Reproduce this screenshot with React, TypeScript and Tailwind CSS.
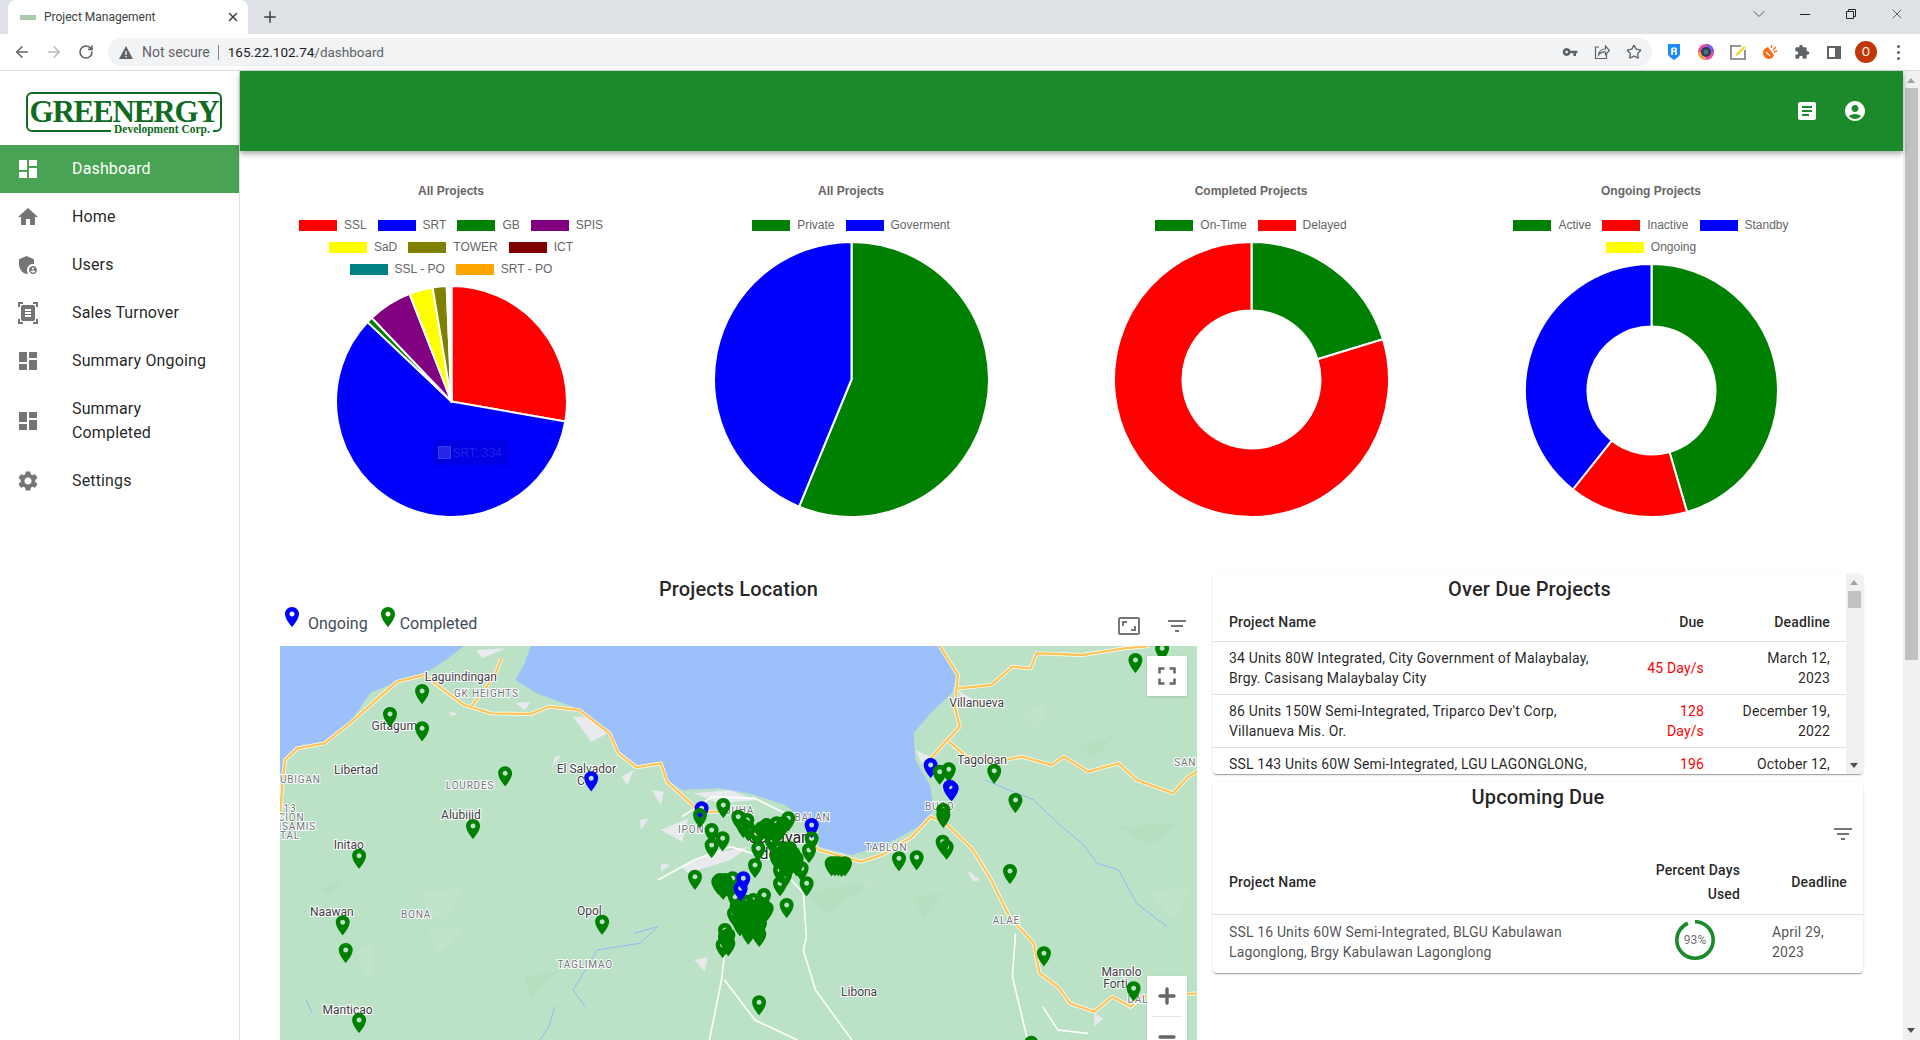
import React from "react";
import { ArrowLeft, ArrowRight, ChevronDown, Minus, Plus, RotateCw, Star, X } from "lucide-react";

const PATHS = {
  dashboard: "M3 13h8V3H3v10zm0 8h8v-6H3v6zm10 0h8V11h-8v10zm0-18v6h8V3h-8z",
  home: "M10 20v-6h4v6h5v-8h3L12 3 2 12h3v8z",
  admin:
    "M17 11c.34 0 .67.04 1 .09V6.27L10.5 3 3 6.27v4.91c0 4.54 3.2 8.79 7.5 9.82.55-.13 1.08-.32 1.6-.55-.69-.98-1.1-2.17-1.1-3.45 0-3.31 2.69-6 6-6zM17 13c-2.21 0-4 1.79-4 4s1.79 4 4 4 4-1.79 4-4-1.79-4-4-4zm0 1.38c.62 0 1.12.51 1.12 1.12s-.51 1.12-1.12 1.12-1.12-.51-1.12-1.12.5-1.12 1.12-1.12zm0 5.37c-.93 0-1.74-.46-2.24-1.17.05-.72 1.51-1.08 2.24-1.08s2.19.36 2.24 1.08c-.5.71-1.31 1.17-2.24 1.17z",
  scanner:
    "M7 3H4v3H2V1h5v2zm15 3V1h-5v2h3v3h2zM7 21H4v-3H2v5h5v-2zm13-3v3h-3v2h5v-5h-2zM19 18c0 1.1-.9 2-2 2H7c-1.1 0-2-.9-2-2V6c0-1.1.9-2 2-2h10c1.1 0 2 .9 2 2v12zM15 8H9v2h6V8zm0 3H9v2h6v-2zm0 3H9v2h6v-2z",
  settings:
    "M19.14 12.94c.04-.3.06-.61.06-.94 0-.32-.02-.64-.07-.94l2.03-1.58c.18-.14.23-.41.12-.61l-1.92-3.32c-.12-.22-.37-.29-.59-.22l-2.39.96c-.5-.38-1.03-.7-1.62-.94l-.36-2.54c-.04-.24-.24-.41-.48-.41h-3.84c-.24 0-.43.17-.47.41l-.36 2.54c-.59.24-1.13.57-1.62.94l-2.39-.96c-.22-.08-.47 0-.59.22L2.74 8.87c-.12.21-.08.47.12.61l2.03 1.58c-.05.3-.09.63-.09.94s.02.64.07.94l-2.03 1.58c-.18.14-.23.41-.12.61l1.92 3.32c.12.22.37.29.59.22l2.39-.96c.5.38 1.03.7 1.62.94l.36 2.54c.05.24.24.41.48.41h3.84c.24 0 .44-.17.47-.41l.36-2.54c.59-.24 1.13-.56 1.62-.94l2.39.96c.22.08.47 0 .59-.22l1.92-3.32c.12-.22.07-.47-.12-.61l-2.01-1.58zM12 15.6c-1.98 0-3.6-1.62-3.6-3.6s1.62-3.6 3.6-3.6 3.6 1.62 3.6 3.6-1.62 3.6-3.6 3.6z",
  article:
    "M19 3H5c-1.1 0-2 .9-2 2v14c0 1.1.9 2 2 2h14c1.1 0 2-.9 2-2V5c0-1.1-.9-2-2-2zm-5 14H7v-2h7v2zm3-4H7v-2h10v2zm0-4H7V7h10v2z",
  account:
    "M12 2C6.48 2 2 6.48 2 12s4.48 10 10 10 10-4.48 10-10S17.52 2 12 2zm0 4c1.93 0 3.5 1.57 3.5 3.5S13.93 13 12 13s-3.5-1.57-3.5-3.5S10.07 6 12 6zm0 14c-2.03 0-4.43-.82-6.14-2.88C7.55 15.8 9.68 15 12 15s4.45.8 6.14 2.12C16.43 19.18 14.03 20 12 20z",
  place:
    "M12 2C8.13 2 5 5.13 5 9c0 5.25 7 13 7 13s7-7.75 7-13c0-3.87-3.13-7-7-7zm0 9.5c-1.38 0-2.5-1.12-2.5-2.5s1.12-2.5 2.5-2.5 2.5 1.12 2.5 2.5-1.12 2.5-2.5 2.5z",
  filter: "M10 18h4v-2h-4v2zM3 6v2h18V6H3zm3 7h12v-2H6v2z",
  aspect:
    "M19 12h-2v3h-3v2h5v-5zM7 9h3V7H5v5h2V9zm14-6H3c-1.1 0-2 .9-2 2v14c0 1.1.9 2 2 2h18c1.1 0 2-.9 2-2V5c0-1.1-.9-2-2-2zm0 16.01H3V4.99h18v14.02z",
  fullscreen: "M7 14H5v5h5v-2H7v-3zm-2-4h2V7h3V5H5v5zm12 7h-3v2h5v-5h-2v3zM14 5v2h3v3h2V5h-5z",
  key: "M12.65 10C11.83 7.67 9.61 6 7 6c-3.31 0-6 2.69-6 6s2.69 6 6 6c2.61 0 4.83-1.67 5.65-4H17v4h4v-4h2v-4H12.65zM7 14c-1.1 0-2-.9-2-2s.9-2 2-2 2 .9 2 2-.9 2-2 2z",
  puzzle:
    "M20.5 11H19V7c0-1.1-.9-2-2-2h-4V3.5C13 2.12 11.88 1 10.5 1S8 2.12 8 3.5V5H4c-1.1 0-1.99.9-1.99 2v3.8H3.5c1.49 0 2.7 1.21 2.7 2.7s-1.21 2.7-2.7 2.7H2V20c0 1.1.9 2 2 2h3.8v-1.5c0-1.49 1.21-2.7 2.7-2.7 1.49 0 2.7 1.21 2.7 2.7V22H17c1.1 0 2-.9 2-2v-4h1.5c1.38 0 2.5-1.12 2.5-2.5S21.88 11 20.5 11z",
};

const Icon: React.FC<{ d: string; className?: string }> = ({ d, className }) => (
  <svg viewBox="0 0 24 24" className={className} fill="currentColor" fillRule="evenodd">
    <path d={d} />
  </svg>
);

// ---- browser window chrome ----

const Extensions: React.FC = () => (
  <div className="flex items-center">
    <div className="w-8 h-8 flex items-center justify-center">
      <svg viewBox="0 0 12 16" className="w-[12px] h-4">
        <path d="M0 0h12v10c0 2-3 4-6 6-3-2-6-4-6-6z" fill="#1a8cff" />
        <path d="M3.2 11V4.6C3.2 3 8.8 3 8.8 4.6V11H7V8H5v3zM5 4.8v1.6h2V4.8z" fill="#fff" />
      </svg>
    </div>
    <div className="w-8 h-8 flex items-center justify-center">
      <svg viewBox="0 0 16 16" className="w-4 h-4">
        <circle cx="8" cy="8" r="8" fill="#e94b9c" />
        <path d="M8 0a8 8 0 0 1 8 8H8z" fill="#7a5cf0" />
        <path d="M0 8a8 8 0 0 0 8 8V8z" fill="#f5a04a" />
        <circle cx="8" cy="8" r="5" fill="#2c3e50" />
        <circle cx="8" cy="8" r="2.4" fill="#51708a" />
      </svg>
    </div>
    <div className="w-8 h-8 flex items-center justify-center">
      <svg viewBox="0 0 16 16" className="w-4 h-4">
        <path d="M1 2h10M1 1v14h14V6" fill="none" stroke="#777" strokeWidth="1.6" />
        <path d="M6 10l8-8 1.6 1.6-8 8H6z" fill="#fbd31c" />
      </svg>
    </div>
    <div className="w-8 h-8 flex items-center justify-center">
      <svg viewBox="0 0 16 16" className="w-4 h-4">
        <path d="M1 9c0-3 2-5 5-6l6 8c-1 3-3 4-5 4-3 0-6-3-6-6z" fill="#ff6a13" />
        <path d="M4 8l4 4" stroke="#fff" strokeWidth="1.2" />
        <path d="M9 4l1-3M11 6l3-3M12 8l3-1" stroke="#ff6a13" strokeWidth="1.4" />
      </svg>
    </div>
    <div className="w-8 h-8 flex items-center justify-center text-[#5f6368]">
      <Icon d={PATHS.puzzle} className="w-4 h-4" />
    </div>
    <div className="w-8 h-8 flex items-center justify-center">
      <div className="w-[14px] h-[13px] border-2 border-r-[6px] border-[#5f6368]" />
    </div>
    <div className="w-8 h-8 flex items-center justify-center">
      <div className="w-[22px] h-[22px] rounded-full bg-[#c1370a] text-white text-[12px] flex items-center justify-center">O</div>
    </div>
    <div className="w-8 h-8 flex flex-col items-center justify-center gap-[3px]">
      <div className="w-[3px] h-[3px] rounded-full bg-[#5f6368]" />
      <div className="w-[3px] h-[3px] rounded-full bg-[#5f6368]" />
      <div className="w-[3px] h-[3px] rounded-full bg-[#5f6368]" />
    </div>
  </div>
);

const BrowserChrome: React.FC = () => (
  <div className="shrink-0">
    <div className="h-[34px] bg-[#dee1e6] flex items-end pl-2">
      <div className="w-[240px] h-[34px] bg-white rounded-t-lg flex items-center pl-3 pr-2">
        <div className="w-4 h-[5px] bg-[#a9cbab] mr-2" />
        <span className="text-[12px] text-[#3c4043] flex-1">Project Management</span>
        <X className="w-[14px] h-[14px] text-[#3c4043]" strokeWidth={2.5} />
      </div>
      <div className="w-11 h-[34px] flex items-center justify-center text-[#3c4043]">
        <Plus className="w-[18px] h-[18px]" strokeWidth={2} />
      </div>
      <div className="ml-auto flex h-[28px] self-start text-[#3c4043]">
        <div className="w-[46px] flex items-center justify-center">
          <ChevronDown className="w-5 h-5" strokeWidth={1} />
        </div>
        <div className="w-[46px] flex items-center justify-center">
          <div className="w-[10px] h-[1px] bg-[#222]" />
        </div>
        <div className="w-[46px] flex items-center justify-center">
          <svg viewBox="0 0 10 10" className="w-[10px] h-[10px]" fill="none" stroke="#222">
            <path d="M.5 2.5h7v7h-7zM2.5 2.5v-2h7v7h-2" />
          </svg>
        </div>
        <div className="w-[46px] flex items-center justify-center">
          <X className="w-[16px] h-[16px] text-[#222]" strokeWidth={1} />
        </div>
      </div>
    </div>
    <div className="h-[37px] bg-white border-b border-[#dadce0] flex items-center pl-1.5 pr-1.5">
      <div className="w-8 flex justify-center text-[#5f6368]">
        <ArrowLeft className="w-[18px] h-[18px]" strokeWidth={2} />
      </div>
      <div className="w-8 flex justify-center text-[#b6b9bd]">
        <ArrowRight className="w-[18px] h-[18px]" strokeWidth={2} />
      </div>
      <div className="w-8 flex justify-center text-[#5f6368]">
        <RotateCw className="w-4 h-4" strokeWidth={2.4} />
      </div>
      <div className="ml-[6px] flex-1 h-[28px] rounded-full bg-[#f1f3f4] flex items-center pl-[11px] pr-[2px]">
        <svg viewBox="0 0 14 13" className="w-[14px] h-[13px]">
          <path d="M7 0l7 13H0z" fill="#5f6368" />
          <path d="M6.3 5h1.4v4H6.3zM6.3 10h1.4v1.4H6.3z" fill="#f1f3f4" />
        </svg>
        <span className="ml-[9px] text-[14px] text-[#5f6368]">Not secure</span>
        <div className="w-px h-[15px] bg-[#80868b] ml-2 mr-[9px]" />
        <span className="text-[13.5px] text-[#202124]">165.22.102.74</span>
        <span className="text-[13.5px] text-[#5f6368]">/dashboard</span>
        <div className="ml-auto flex items-center text-[#5f6368]">
          <div className="w-8 flex justify-center">
            <Icon d={PATHS.key} className="w-4 h-4" />
          </div>
          <div className="w-8 flex justify-center">
            <svg viewBox="0 0 16 16" className="w-4 h-4" fill="none" stroke="#5f6368" strokeWidth="1.2">
              <path d="M5 3H1.5v11.5h11V10" />
              <path d="M4.5 11c.5-4 3.5-6 7-6V2l4 4.5-4 4V8C8 7.5 6 9 4.5 11z" />
            </svg>
          </div>
          <div className="w-8 flex justify-center">
            <Star className="w-4 h-4" strokeWidth={2} />
          </div>
        </div>
      </div>
      <div className="ml-[6px]">
        <Extensions />
      </div>
    </div>
  </div>
);

// ---- sidebar ----

const navItems = [
  { label: "Dashboard", icon: PATHS.dashboard, active: true },
  { label: "Home", icon: PATHS.home },
  { label: "Users", icon: PATHS.admin },
  { label: "Sales Turnover", icon: PATHS.scanner },
  { label: "Summary Ongoing", icon: PATHS.dashboard },
  { label: "Summary Completed", icon: PATHS.dashboard },
  { label: "Settings", icon: PATHS.settings },
];

const Logo: React.FC = () => (
  <div className="h-[74px] pl-[26px] pt-[21px]">
    <div className="relative w-[196px] h-[40px] border-2 border-[#0f6b22] rounded-[6px] text-[#0f6b22] font-['Liberation_Serif',serif] font-bold">
      <div className="text-[31px] leading-[36px] tracking-[-1.2px] text-center whitespace-nowrap">GREENERGY</div>
      <div className="absolute left-[83px] top-[28px] bg-white px-[3px] text-[11.5px] leading-[14px] whitespace-nowrap">Development Corp.</div>
    </div>
  </div>
);

const Sidebar: React.FC = () => (
  <div className="w-[240px] shrink-0 border-r border-[#e0e0e0] bg-white">
    <Logo />
    {navItems.map((item) => (
      <div
        key={item.label}
        className={item.active ? "flex items-center min-h-12 px-4 py-3 bg-[#49a354] text-white" : "flex items-center min-h-12 px-4 py-3 text-[rgba(0,0,0,0.87)]"}
      >
        <Icon d={item.icon} className={item.active ? "w-6 h-6 shrink-0 text-white" : "w-6 h-6 shrink-0 text-[#757575]"} />
        <span className="ml-8 text-[16px] leading-6 tracking-[0.15px] w-[136px]">{item.label}</span>
      </div>
    ))}
  </div>
);

// ---- charts ----

type Segment = { color: string; end: number };

const polar = (c: number, r: number, deg: number): [number, number] => {
  const a = ((deg - 90) * Math.PI) / 180;
  return [c + r * Math.cos(a), c + r * Math.sin(a)];
};

const arcPath = (c: number, r: number, inner: number, from: number, to: number) => {
  const large = to - from > 180 ? 1 : 0;
  const [x1, y1] = polar(c, r, from);
  const [x2, y2] = polar(c, r, to);
  if (inner === 0) return `M${c} ${c}L${x1} ${y1}A${r} ${r} 0 ${large} 1 ${x2} ${y2}Z`;
  const [x3, y3] = polar(c, inner, to);
  const [x4, y4] = polar(c, inner, from);
  return `M${x1} ${y1}A${r} ${r} 0 ${large} 1 ${x2} ${y2}L${x3} ${y3}A${inner} ${inner} 0 ${large} 0 ${x4} ${y4}Z`;
};

const Pie: React.FC<{ size: number; hole?: number; segments: Segment[] }> = ({ size, hole = 0, segments }) => {
  const c = size / 2;
  let from = 0;
  return (
    <svg width={size} height={size} viewBox={`0 0 ${size} ${size}`} className="block overflow-visible">
      {segments.map((s, i) => {
        // the white segment stroke eats a pixel, so the arc runs one past the box
        const d = arcPath(c, c + 1, hole, from, s.end);
        from = s.end;
        return <path key={i} d={d} fill={s.color} stroke="#fff" strokeWidth={2} strokeLinejoin="round" />;
      })}
    </svg>
  );
};

const ChartCard: React.FC<{
  title: string;
  legend: { label: string; color: string }[];
  children: React.ReactNode;
}> = ({ title, legend, children }) => (
  <div className="w-[400px] flex flex-col items-center font-['Liberation_Sans',Arial,sans-serif] text-[#666]">
    <div className="h-[14px] leading-[14px] text-[12px] font-bold">{title}</div>
    <div className="mt-[16px] w-[330px] flex flex-wrap justify-center">
      {legend.map((l) => (
        <div key={l.label} className="h-[22px] flex items-center text-[12px] mx-[5.5px]">
          <div className="w-[38px] h-[11px] mr-[7px]" style={{ backgroundColor: l.color }} />
          {l.label}
        </div>
      ))}
    </div>
    <div className="relative mt-[7px]">{children}</div>
  </div>
);

const Charts: React.FC = () => (
  <div className="flex pl-[11px] pt-[33px] h-[365px] shrink-0">
    <ChartCard
      title="All Projects"
      legend={[
        { label: "SSL", color: "#ff0000" },
        { label: "SRT", color: "#0000ff" },
        { label: "GB", color: "#008000" },
        { label: "SPIS", color: "#800080" },
        { label: "SaD", color: "#ffff00" },
        { label: "TOWER", color: "#808000" },
        { label: "ICT", color: "#800000" },
        { label: "SSL - PO", color: "#008080" },
        { label: "SRT - PO", color: "#ffa500" },
      ]}
    >
      <Pie
        size={229}
        segments={[
          { color: "#ff0000", end: 100 },
          { color: "#0000ff", end: 313.4 },
          { color: "#008000", end: 316.4 },
          { color: "#800080", end: 338.7 },
          { color: "#ffff00", end: 350.6 },
          { color: "#808000", end: 357.6 },
          { color: "#800000", end: 358.2 },
          { color: "#008080", end: 359 },
          { color: "#ffa500", end: 360 },
        ]}
      />
      <div className="absolute left-[96px] top-[153px] w-[76px] h-[25px] rounded-[6px] bg-black/10 flex items-center pl-[5px] text-[12px] text-white/15">
        <div className="w-[13px] h-[13px] bg-white/15 border border-white/10 mr-[2px]" />
        SRT: 334
      </div>
    </ChartCard>
    <ChartCard
      title="All Projects"
      legend={[
        { label: "Private", color: "#008000" },
        { label: "Goverment", color: "#0000ff" },
      ]}
    >
      <Pie
        size={273}
        segments={[
          { color: "#008000", end: 202.4 },
          { color: "#0000ff", end: 360 },
        ]}
      />
    </ChartCard>
    <ChartCard
      title="Completed Projects"
      legend={[
        { label: "On-Time", color: "#008000" },
        { label: "Delayed", color: "#ff0000" },
      ]}
    >
      <Pie
        size={273}
        hole={69}
        segments={[
          { color: "#008000", end: 73 },
          { color: "#ff0000", end: 360 },
        ]}
      />
    </ChartCard>
    <ChartCard
      title="Ongoing Projects"
      legend={[
        { label: "Active", color: "#008000" },
        { label: "Inactive", color: "#ff0000" },
        { label: "Standby", color: "#0000ff" },
        { label: "Ongoing", color: "#ffff00" },
      ]}
    >
      <Pie
        size={251}
        hole={64}
        segments={[
          { color: "#008000", end: 163.7 },
          { color: "#ff0000", end: 218.5 },
          { color: "#0000ff", end: 360 },
        ]}
      />
    </ChartCard>
  </div>
);

// ---- map ----

// points read off the reference crops, then converted to map pixels
const pt = (x: number, y: number): [number, number] => [x / 1.65 - 10, y / 3 - 86];
const cityPt = (x: number, y: number): [number, number] => [380 + x / 3, 114 + y / 3];
const line = (pts: number[][]) => pts.map(([x, y], i) => `${i ? "L" : "M"}${pt(x, y).join(" ")}`).join("");
const poly = (pts: number[][]) => `${line(pts)}Z`;

const waterWest = [[0, 258], [320, 258], [290, 300], [260, 335], [215, 360], [165, 400], [135, 480], [90, 550], [40, 565], [25, 610], [17, 720], [0, 720]];
const waterBay = [[430, 258], [420, 310], [405, 360], [440, 400], [500, 440], [550, 510], [575, 570], [600, 620], [640, 605], [655, 660], [680, 690], [740, 685], [790, 700], [850, 735], [875, 770], [905, 800], [905, 860], [960, 885], [1020, 850], [1070, 800], [1095, 750], [1090, 680], [1065, 600], [1062, 520], [1090, 460], [1125, 400], [1135, 340], [1105, 258]];

const greyPatches = [
  [[500, 470], [520, 470], [558, 520], [530, 545]],
  [[295, 455], [310, 460], [300, 470]],
  [[405, 430], [430, 425], [420, 450]],
  [[630, 690], [650, 695], [645, 735]],
  [[645, 810], [690, 775], [680, 845]],
  [[580, 650], [600, 630], [590, 675]],
  [[610, 780], [625, 775], [612, 810]],
  [[1135, 390], [1170, 430], [1145, 435]],
  [[1065, 570], [1090, 590], [1075, 610]],
  [[470, 590], [480, 585], [465, 625]],
  [[645, 910], [660, 915], [645, 935]],
  [[700, 1200], [722, 1190], [718, 1235]],
  [[1150, 930], [1172, 960], [1160, 965]],
  [[700, 700], [760, 690], [800, 720], [740, 730]],
  [[1360, 1360], [1375, 1375], [1360, 1400]],
  [[340, 270], [390, 265], [350, 295]],
  [[730, 880], [790, 860], [760, 900], [690, 940], [680, 920]],
];

const terrain = [
  [[85, 990], [120, 960], [100, 1010]],
  [[250, 1000], [320, 980], [290, 1080], [260, 1060]],
  [[1400, 800], [1500, 790], [1450, 860]],
  [[1240, 470], [1280, 430], [1270, 510]],
  [[880, 1000], [1000, 960], [920, 1060]],
  [[140, 1180], [170, 1140], [165, 1260]],
  [[1060, 1010], [1110, 1000], [1080, 1080]],
  [[260, 1110], [320, 1100], [280, 1180]],
  [[1330, 560], [1400, 520], [1360, 590]],
  [[980, 960], [1000, 965], [980, 1000]],
  [[420, 1250], [480, 1230], [430, 1320]],
  [[1450, 1000], [1520, 980], [1490, 1080]],
];

const orangeRoads = [
  [[17, 760], [20, 680], [25, 600], [45, 565], [90, 550], [135, 485], [175, 420], [210, 365], [255, 345], [290, 395], [320, 435], [365, 460], [430, 462], [460, 440], [510, 450], [560, 520], [575, 580], [605, 622], [645, 610], [655, 665], [700, 740], [720, 755], [790, 755]],
  [[890, 840], [905, 870], [945, 890], [975, 905], [1010, 885], [1060, 830], [1090, 770], [1115, 790], [1160, 870], [1190, 960], [1220, 1070], [1260, 1150], [1270, 1240], [1300, 1280], [1320, 1330], [1360, 1355], [1390, 1310], [1420, 1340], [1440, 1310], [1530, 1300]],
  [[1105, 258], [1135, 345], [1130, 440], [1138, 500], [1115, 545], [1090, 595]],
  [[1120, 545], [1150, 590], [1200, 605], [1240, 590], [1290, 615], [1310, 590], [1350, 635], [1400, 610], [1430, 660], [1490, 700], [1515, 650], [1530, 635]],
  [[1135, 385], [1190, 375], [1225, 320], [1255, 325], [1265, 280], [1340, 285], [1410, 265], [1450, 258]],
  [[382, 295], [370, 350], [332, 440]],
];

const whiteRoads = [
  [[680, 770], [730, 710], [800, 715], [850, 760]],
  [[880, 1000], [885, 1130], [880, 1170], [900, 1290], [960, 1440]],
  [[750, 1180], [745, 1260], [725, 1440]],
  [[750, 1260], [800, 1380], [870, 1440]],
  [[1230, 1120], [1225, 1250], [1250, 1440]],
  [[1275, 1340], [1300, 1410], [1350, 1420]],
  [[700, 900], [760, 860], [830, 900], [880, 1000]],
  [[640, 960], [700, 900]],
];

const rivers = [
  [[1180, 660], [1260, 720], [1300, 790], [1340, 850], [1365, 910], [1400, 930], [1430, 1030], [1480, 1100]],
  [[600, 1120], [640, 1100], [610, 1150], [540, 1170], [500, 1290], [520, 1340]],
  [[470, 1340], [460, 1400], [445, 1440]],
  [[60, 1320], [70, 1360]],
];

const labels = [
  { t: "Laguindingan", x: 315, y: 352, big: true },
  { t: "GK HEIGHTS", x: 357, y: 399 },
  { t: "Gitagum", x: 205, y: 498, big: true },
  { t: "Libertad", x: 142, y: 630, big: true },
  { t: "UBIGAN", x: 50, y: 656 },
  { t: "LOURDES", x: 330, y: 675 },
  { t: "El Salvador", x: 522, y: 627, big: true },
  { t: "C", x: 513, y: 663, big: true },
  { t: "IPON", x: 695, y: 806 },
  { t: "Alubijid", x: 315, y: 765, big: true },
  { t: "13", x: 33, y: 743 },
  { t: "CION", x: 35, y: 771 },
  { t: "ISAMIS", x: 45, y: 798 },
  { t: "TAL", x: 33, y: 826 },
  { t: "Initao", x: 130, y: 855, big: true },
  { t: "Naawan", x: 102, y: 1056, big: true },
  { t: "BONA", x: 241, y: 1062 },
  { t: "Opol", x: 527, y: 1053, big: true },
  { t: "TAGLIMAO", x: 520, y: 1212 },
  { t: "Manticao", x: 128, y: 1350, big: true },
  { t: "Libona", x: 972, y: 1296, big: true },
  { t: "Villanueva", x: 1166, y: 430, big: true },
  { t: "Tagoloan", x: 1175, y: 600, big: true },
  { t: "SAN", x: 1510, y: 605 },
  { t: "BUGO", x: 1105, y: 737 },
  { t: "JUHA", x: 775, y: 750 },
  { t: "BALAN", x: 895, y: 770 },
  { t: "TABLON", x: 1017, y: 860 },
  { t: "ALAE", x: 1215, y: 1080 },
  { t: "Manolo", x: 1405, y: 1237, big: true },
  { t: "Forti", x: 1395, y: 1273, big: true },
  { t: "DAL", x: 1432, y: 1318 },
];

const greenOuter = [
  [1472, 265], [1428, 300], [251, 393], [198, 462], [251, 505], [388, 640], [335, 798], [147, 887], [120, 1087], [125, 1170],
  [147, 1380], [548, 1085], [807, 1327], [1195, 632], [1105, 635], [1120, 628], [1230, 720], [1221, 933], [1277, 1180], [1425, 1285], [1256, 1448],
].map(([x, y]) => pt(x, y));

const blueUnder = [[125, 145], [455, 195], [812, 15]].map(([x, y]) => cityPt(x, y));
const blueOver = [[250, 355], [242, 385], [875, 85], [870, 80]].map(([x, y]) => cityPt(x, y));
const blueOuter = [pt(530, 655)];

const greenCity = [
  [120, 165], [190, 135], [235, 170], [262, 180], [250, 195], [155, 210], [188, 235], [155, 255], [105, 350], [285, 315],
  [295, 265], [290, 220], [320, 195], [350, 190], [385, 175], [345, 215], [335, 240], [455, 235], [447, 270], [375, 265],
  [360, 280], [390, 265], [410, 295], [380, 300], [365, 285], [425, 325], [360, 330], [375, 345], [360, 370], [440, 370],
  [380, 435], [515, 310], [525, 310], [535, 310], [545, 312], [555, 310], [717, 295], [770, 292], [850, 165], [850, 150],
  [848, 245], [860, 260], [180, 360], [195, 360], [218, 355], [175, 365], [190, 380], [225, 410], [312, 405], [260, 425],
  [280, 420], [300, 430], [320, 445], [222, 460], [240, 490], [260, 450], [280, 460], [295, 470], [270, 490], [285, 500],
  [265, 515], [298, 522], [195, 510], [205, 525], [188, 555], [205, 550], [290, 445], [305, 450], [250, 440],
  // the solid middle of the cluster, where pins sit on one another
  [265, 205], [305, 205], [330, 205], [360, 205], [370, 190], [355, 265], [370, 280], [385, 285], [400, 280], [350, 290],
  [365, 300], [395, 305], [380, 315], [410, 310], [270, 440], [285, 440], [255, 470], [275, 475], [310, 435], [250, 490],
  [300, 490], [280, 480], [290, 510], [270, 505], [200, 370], [185, 375], [210, 380], [230, 440], [235, 475], [195, 530],
].map(([x, y]) => cityPt(x, y));

const Pins: React.FC<{ list: number[][]; color: string }> = ({ list, color }) => (
  <>
    {list.map(([x, y], i) => (
      <path key={i} d={PATHS.place} fill={color} fillRule="evenodd" transform={`translate(${x - 12} ${y - 9})`} />
    ))}
  </>
);

const MapView: React.FC = () => (
  <div className="relative w-[917px] h-[394px] overflow-hidden bg-[#bbe2c6]">
    <svg viewBox="0 0 917 394" className="block w-[917px] h-[394px] font-[Roboto,sans-serif]">
      {terrain.map((p, i) => (
        <path key={i} d={poly(p)} fill={i % 2 ? "#c0e4ca" : "#b4dfc0"} />
      ))}
      {greyPatches.map((p, i) => (
        <path key={i} d={poly(p)} fill="#e8eaed" />
      ))}
      <path d={poly(waterWest)} fill="#9cc0f9" />
      <path d={poly(waterBay)} fill="#9cc0f9" />
      {rivers.map((p, i) => (
        <path key={i} d={line(p)} fill="none" stroke="#8fb8f5" strokeWidth={1} />
      ))}
      {whiteRoads.map((p, i) => (
        <path key={i} d={line(p)} fill="none" stroke="#fff" strokeWidth={1.6} />
      ))}
      {orangeRoads.map((p, i) => (
        <g key={i}>
          <path d={line(p)} fill="none" stroke="#fff" strokeWidth={3.8} />
          <path d={line(p)} fill="none" stroke="#fdc558" strokeWidth={2.4} />
        </g>
      ))}
      {labels.map((l) => (
        <text
          key={l.t}
          x={pt(l.x, l.y)[0]}
          y={pt(l.x, l.y)[1] + 4}
          textAnchor="middle"
          fontSize={l.big ? 12 : 10}
          letterSpacing={l.big ? 0 : 0.8}
          fill={l.big ? "#3c4043" : "#70757a"}
          stroke="#fff"
          strokeWidth={2}
          paintOrder="stroke"
        >
          {l.t}
        </text>
      ))}
      <text x={pt(840, 832)[0]} y={pt(840, 832)[1] + 6} textAnchor="middle" fontSize={16} fill="#202124" stroke="#fff" strokeWidth={2} paintOrder="stroke">Cagayan</text>
      <text x={pt(822, 880)[0]} y={pt(822, 880)[1] + 6} textAnchor="middle" fontSize={16} fill="#202124" stroke="#fff" strokeWidth={2} paintOrder="stroke">de</text>
      <Pins list={blueUnder} color="#0000ff" />
      <Pins list={blueOuter} color="#0000ff" />
      <Pins list={greenOuter} color="#008000" />
      <Pins list={greenCity} color="#008000" />
      <Pins list={blueOver} color="#0000ff" />
    </svg>
    <div className="absolute top-[10px] right-[10px] w-10 h-10 bg-white flex items-center justify-center text-[#666] shadow-sm">
      <Icon d={PATHS.fullscreen} className="w-[30px] h-[30px]" />
    </div>
    <div className="absolute top-[330px] right-[10px] w-10 h-[81px] bg-white shadow-sm flex flex-col items-center text-[#666]">
      <div className="h-10 flex items-center justify-center">
        <Plus className="w-6 h-6" strokeWidth={3.4} />
      </div>
      <div className="w-[30px] h-px bg-[#e6e6e6]" />
      <div className="h-10 flex items-center justify-center">
        <Minus className="w-6 h-6" strokeWidth={3.4} />
      </div>
    </div>
  </div>
);

const MapPanel: React.FC = () => (
  <div className="w-[917px] shrink-0">
    <h2 className="h-8 text-[20px] leading-[30px] tracking-[0.15px] font-medium text-center text-[rgba(0,0,0,0.87)]">Projects Location</h2>
    <div className="h-10 flex items-start">
      <Icon d={PATHS.place} className="w-6 h-6 -mt-[1px] text-[#0000ff]" />
      <span className="ml-[4px] mt-[8px] text-[16px] leading-5 text-[#3f4d5a]">Ongoing</span>
      <Icon d={PATHS.place} className="w-6 h-6 -mt-[1px] ml-[8px] text-[#008000]" />
      <span className="ml-0 mt-[8px] text-[16px] leading-5 text-[#3f4d5a]">Completed</span>
      <div className="ml-auto flex text-[#757575] mt-[8px]">
        <Icon d={PATHS.aspect} className="w-6 h-6" />
        <Icon d={PATHS.filter} className="w-6 h-6 ml-6 mr-[8px]" />
      </div>
    </div>
    <MapView />
  </div>
);

// ---- tables ----

const overDue = [
  { name: "34 Units 80W Integrated, City Government of Malaybalay, Brgy. Casisang Malaybalay City", due: "45 Day/s", deadline: "March 12, 2023" },
  { name: "86 Units 150W Semi-Integrated, Triparco Dev't Corp, Villanueva Mis. Or.", due: "128 Day/s", deadline: "December 19, 2022" },
  { name: "SSL 143 Units 60W Semi-Integrated, LGU LAGONGLONG, Misamis Oriental", due: "196 Day/s", deadline: "October 12, 2022" },
];

const OverDueCard: React.FC = () => (
  <div className="relative h-[200px] rounded bg-white overflow-hidden shadow-[0_2px_1px_-1px_rgba(0,0,0,0.2),0_1px_1px_0_rgba(0,0,0,0.14),0_1px_3px_0_rgba(0,0,0,0.12)]">
    <div className="w-[633px]">
      <h2 className="h-8 text-[20px] leading-[30px] tracking-[0.15px] font-medium text-center text-[rgba(0,0,0,0.87)]">Over Due Projects</h2>
      <table className="table-fixed w-[633px] text-[14px] leading-5 tracking-[0.15px] text-[rgba(0,0,0,0.87)]">
        <colgroup>
          <col className="w-[417px]" />
          <col className="w-[90px]" />
          <col className="w-[126px]" />
        </colgroup>
        <thead>
          <tr className="border-b border-[#e0e0e0] h-[35px]">
            <th className="pl-4 pb-[2px] text-left font-medium">Project Name</th>
            <th className="pr-4 pb-[2px] text-right font-medium">Due</th>
            <th className="pr-4 pb-[2px] text-right font-medium">Deadline</th>
          </tr>
        </thead>
        <tbody>
          {overDue.map((row) => (
            <tr key={row.name} className="border-b border-[#e0e0e0] h-[53px]">
              <td className="pl-4 pr-[26px] py-[6px] align-top">{row.name}</td>
              <td className="pl-4 pr-4 py-[6px] text-right text-[#ff0000]">{row.due}</td>
              <td className="pl-4 pr-4 py-[6px] text-right align-top">{row.deadline}</td>
            </tr>
          ))}
        </tbody>
      </table>
    </div>
    <div className="absolute top-0 right-0 bottom-0 w-[17px] bg-[#f1f1f1]">
      <div className="absolute top-[6px] left-[4px] w-0 h-0 border-x-[4px] border-x-transparent border-b-[5px] border-b-[#a3a3a3]" />
      <div className="absolute top-[17px] left-[2px] w-[13px] h-[17px] bg-[#c1c1c1]" />
      <div className="absolute bottom-[6px] left-[4px] w-0 h-0 border-x-[4px] border-x-transparent border-t-[5px] border-t-[#505050]" />
    </div>
  </div>
);

const Progress: React.FC<{ value: number }> = ({ value }) => {
  const r = 18.2;
  const len = 2 * Math.PI * r;
  return (
    <div className="relative w-10 h-10 mx-auto mb-[5px]">
      <svg viewBox="0 0 40 40" className="w-10 h-10 -rotate-90">
        <circle cx="20" cy="20" r={r} fill="none" stroke="#1b8a2a" strokeWidth={3.6} strokeDasharray={`${(len * value) / 100} ${len}`} />
      </svg>
      <div className="absolute inset-0 flex items-center justify-center text-[12px] text-[rgba(0,0,0,0.6)]">{value}%</div>
    </div>
  );
};

const UpcomingCard: React.FC = () => (
  <div className="h-[191px] rounded bg-white overflow-hidden shadow-[0_2px_1px_-1px_rgba(0,0,0,0.2),0_1px_1px_0_rgba(0,0,0,0.14),0_1px_3px_0_rgba(0,0,0,0.12)]">
    <h2 className="h-8 text-[20px] leading-[30px] tracking-[0.15px] font-medium text-center text-[rgba(0,0,0,0.87)]">Upcoming Due</h2>
    <div className="h-[38px] flex justify-end items-end pr-2 text-[#757575]">
      <Icon d={PATHS.filter} className="w-6 h-6 mb-[6px]" />
    </div>
    <table className="table-fixed w-[650px] text-[14px] tracking-[0.15px] text-[rgba(0,0,0,0.87)]">
      <colgroup>
        <col className="w-[421px]" />
        <col className="w-[122px]" />
        <col className="w-[107px]" />
      </colgroup>
      <thead>
        <tr className="border-b border-[#e0e0e0] h-[62px] leading-6">
          <th className="pl-4 pb-[2px] text-left font-medium">Project Name</th>
          <th className="pl-4 pr-4 pb-[2px] text-right font-medium">Percent Days Used</th>
          <th className="pr-4 pb-[2px] text-right font-medium">Deadline</th>
        </tr>
      </thead>
      <tbody className="leading-5 text-[rgba(0,0,0,0.7)]">
        <tr className="h-[59px]">
          <td className="pl-4 pr-4 pb-[3px]">SSL 16 Units 60W Semi-Integrated, BLGU Kabulawan Lagonglong, Brgy Kabulawan Lagonglong</td>
          <td className="pl-4 pr-4 pb-[3px]">
            <Progress value={93} />
          </td>
          <td className="pl-4 pr-4 pb-[3px]">April 29, 2023</td>
        </tr>
      </tbody>
    </table>
  </div>
);

const PageScrollbar: React.FC = () => (
  <div className="relative w-[17px] shrink-0 bg-[#f1f1f1]">
    <div className="absolute top-[7px] left-[4px] w-0 h-0 border-x-[4px] border-x-transparent border-b-[5px] border-b-[#a3a3a3]" />
    <div className="absolute top-[17px] left-[2px] w-[13px] h-[572px] bg-[#c1c1c1]" />
    <div className="absolute bottom-[7px] left-[4px] w-0 h-0 border-x-[4px] border-x-transparent border-t-[5px] border-t-[#505050]" />
  </div>
);

const App: React.FC = () => {
  return (
    <div className="w-[1920px] h-[1040px] overflow-hidden flex flex-col bg-white font-[Roboto,sans-serif]">
      <BrowserChrome />
      <div className="flex-1 flex min-h-0">
        <Sidebar />
        <div className="flex-1 min-w-0 flex flex-col">
          <header className="relative z-10 h-[80px] shrink-0 bg-[#1b8a2a] shadow-[0_2px_4px_-1px_rgba(0,0,0,0.2),0_4px_5px_0_rgba(0,0,0,0.14),0_1px_10px_0_rgba(0,0,0,0.12)] flex items-center justify-end pr-[36px] text-white">
            <Icon d={PATHS.article} className="w-6 h-6" />
            <Icon d={PATHS.account} className="w-6 h-6 ml-6" />
          </header>
          <Charts />
          <div className="flex gap-4 pl-10 pt-[58px]">
            <MapPanel />
            <div className="w-[650px] shrink-0 flex flex-col gap-2">
              <OverDueCard />
              <UpcomingCard />
            </div>
          </div>
        </div>
        <PageScrollbar />
      </div>
    </div>
  );
};

export default App;
